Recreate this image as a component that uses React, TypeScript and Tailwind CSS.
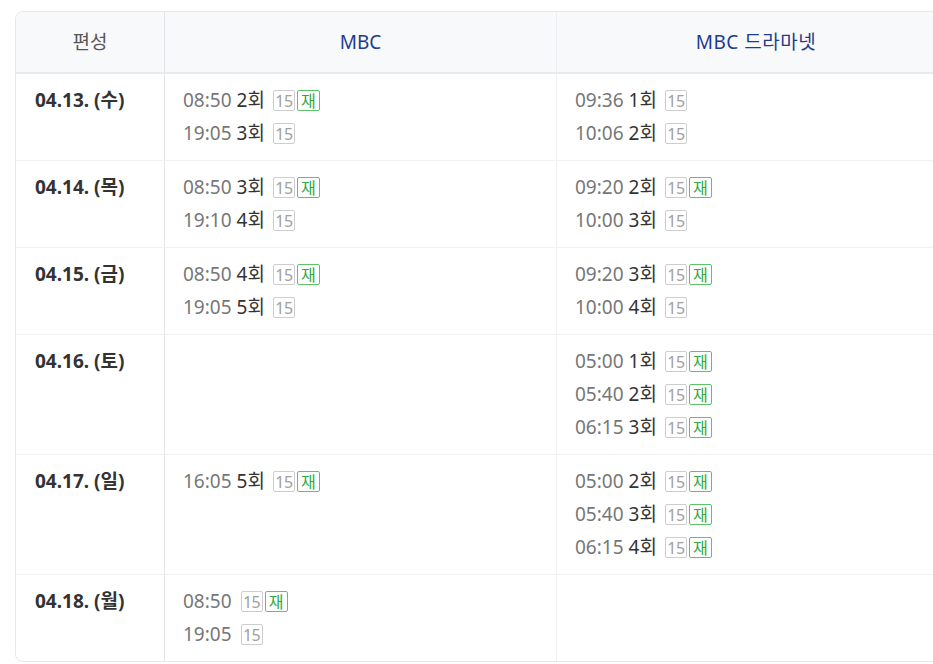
import React from 'react';

type Slot = { time: string; ep?: string; re?: boolean };
type Row = { date: string; mbc: Slot[]; drama: Slot[] };

const rows: Row[] = [
  {
    date: '04.13. (수)',
    mbc: [{ time: '08:50', ep: '2회', re: true }, { time: '19:05', ep: '3회' }],
    drama: [{ time: '09:36', ep: '1회' }, { time: '10:06', ep: '2회' }],
  },
  {
    date: '04.14. (목)',
    mbc: [{ time: '08:50', ep: '3회', re: true }, { time: '19:10', ep: '4회' }],
    drama: [{ time: '09:20', ep: '2회', re: true }, { time: '10:00', ep: '3회' }],
  },
  {
    date: '04.15. (금)',
    mbc: [{ time: '08:50', ep: '4회', re: true }, { time: '19:05', ep: '5회' }],
    drama: [{ time: '09:20', ep: '3회', re: true }, { time: '10:00', ep: '4회' }],
  },
  {
    date: '04.16. (토)',
    mbc: [],
    drama: [
      { time: '05:00', ep: '1회', re: true },
      { time: '05:40', ep: '2회', re: true },
      { time: '06:15', ep: '3회', re: true },
    ],
  },
  {
    date: '04.17. (일)',
    mbc: [{ time: '16:05', ep: '5회', re: true }],
    drama: [
      { time: '05:00', ep: '2회', re: true },
      { time: '05:40', ep: '3회', re: true },
      { time: '06:15', ep: '4회', re: true },
    ],
  },
  {
    date: '04.18. (월)',
    mbc: [{ time: '08:50', re: true }, { time: '19:05' }],
    drama: [],
  },
];

function SlotLine({ slot }: { slot: Slot }) {
  return (
    <div className="flex h-[33px] items-center">
      <span className="text-[#777]">{slot.time}</span>
      {slot.ep && <span className="ml-[5px] text-[#333]">{slot.ep}</span>}
      <div className={`flex gap-[2px] ${slot.ep ? 'ml-[8px]' : 'ml-[9px]'}`}>
        <span className="flex h-[21px] w-[22px] items-center justify-center rounded-[2px] border border-[#cdcdcd] text-[16px] tracking-[-0.5px] text-[#a0a0a0]">
          15
        </span>
        {slot.re && (
          <span className="flex h-[21px] w-[23px] items-center justify-center rounded-[2px] border border-[#5cc466] text-[16px] text-[#2fa83c]">
            재
          </span>
        )}
      </div>
    </div>
  );
}

export default function App() {
  return (
    <div
      className="h-[664px] w-full overflow-hidden bg-white pl-[15px] pt-[11px]"
      style={{ fontFamily: '"Noto Sans", "Noto Sans CJK KR", sans-serif' }}
    >
      <div className="w-[945px] overflow-hidden rounded-lg border border-[#e6e8ec] text-[19px]">
        <div className="grid grid-cols-[149px_392px_1fr] border-b-2 border-[#e8eaee] bg-[#f8f9fb]">
          <div className="flex h-[60px] items-center justify-center border-r border-[#e3e5e9] text-[#555]">편성</div>
          <div className="flex h-[60px] items-center justify-center border-r border-[#eceef1] text-[#1f3d8f]">MBC</div>
          <div className="flex h-[60px] items-center justify-center pr-[4px] tracking-[0.5px] text-[#1f3d8f]">MBC 드라마넷</div>
        </div>
        {rows.map((row, i) => (
          <div
            key={row.date}
            className={`grid grid-cols-[149px_392px_1fr] ${i < rows.length - 1 ? 'border-b border-[#f0f1f3]' : ''}`}
          >
            <div className="border-r border-[#e3e5e9] py-[10px] pl-[19px]">
              <div className="flex h-[33px] items-center font-bold text-[#333]">{row.date}</div>
            </div>
            <div className="border-r border-[#f0f1f3] py-[10px] pl-[18px]">
              {row.mbc.map((s) => (
                <SlotLine key={s.time} slot={s} />
              ))}
            </div>
            <div className="py-[10px] pl-[18px]">
              {row.drama.map((s) => (
                <SlotLine key={s.time} slot={s} />
              ))}
            </div>
          </div>
        ))}
      </div>
    </div>
  );
}
